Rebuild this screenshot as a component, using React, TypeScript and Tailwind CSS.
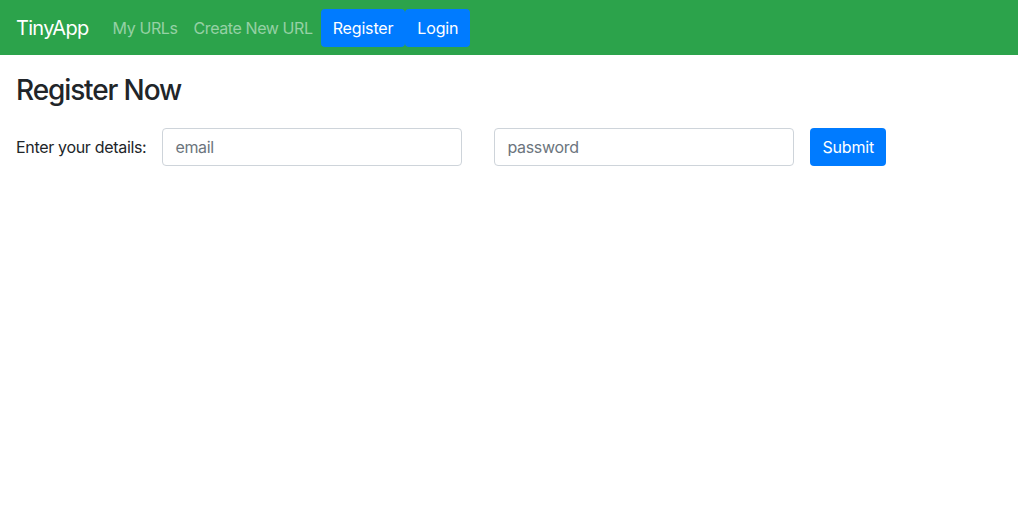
export default function App() {
  return (
    <div className="min-h-screen bg-white text-[#212529] font-['Inter','Liberation_Sans',sans-serif] tracking-[-0.02em]">
      <nav className="flex h-[55px] items-center bg-[#2ca34b] px-4">
        <a className="mr-4 text-[20px] tracking-[-0.035em] text-white" href="#">
          TinyApp
        </a>
        <a className="px-2 py-2 text-base tracking-[-0.025em] text-white/50" href="#">
          My URLs
        </a>
        <a className="px-2 py-2 text-base tracking-[-0.025em] text-white/50" href="#">
          Create New URL
        </a>
        <button className="h-[38px] rounded bg-[#007bff] px-3 text-base tracking-[-0.01em] text-white">Register</button>
        <button className="h-[38px] rounded bg-[#007bff] px-3 text-base tracking-[-0.01em] text-white">Login</button>
      </nav>
      <main className="px-4 pt-[19px]">
        <h3 className="mb-[20px] text-[28px] font-medium leading-[1.2] tracking-[-0.04em]">Register Now</h3>
        <form className="flex items-center" onSubmit={(e) => e.preventDefault()}>
          <label className="mr-4 text-base">Enter your details:</label>
          <input
            type="email"
            placeholder="email"
            className="h-[38px] w-[300px] rounded border border-[#ced4da] px-3 text-base placeholder:text-[#6c757d]"
          />
          <input
            type="password"
            placeholder="password"
            className="ml-8 h-[38px] w-[300px] rounded border border-[#ced4da] px-3 text-base placeholder:text-[#6c757d]"
          />
          <button type="submit" className="ml-4 h-[38px] rounded bg-[#007bff] px-3 text-base tracking-[-0.01em] text-white">
            Submit
          </button>
        </form>
      </main>
    </div>
  );
}
